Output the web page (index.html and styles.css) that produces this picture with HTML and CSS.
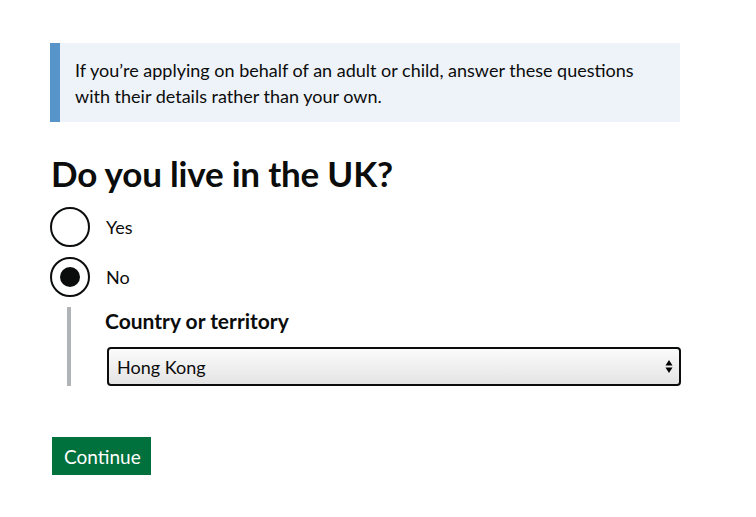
FILE: index.html
```html
<!DOCTYPE html>
<html lang="en">
<head>
    <meta charset="UTF-8">
    <meta name="viewport" content="width=device-width, initial-scale=1.0">
    <title>Do you live in the UK?</title>
    <link rel="stylesheet" href="styles.css">
</head>
<body>
    <div class="container">
        <div class="inset">
            If you’re applying on behalf of an adult or child, answer these questions with their details rather than your own.
        </div>
        <h1>Do you live in the UK?</h1>
        <div class="radios">
            <label class="radio">
                <span class="circle"></span>
                <span class="radio-label">Yes</span>
            </label>
            <label class="radio">
                <span class="circle checked"></span>
                <span class="radio-label">No</span>
            </label>
            <div class="conditional">
                <div class="field-label">Country or territory</div>
                <div class="select">
                    <span>Hong Kong</span>
                    <svg class="arrows" width="8" height="15" viewBox="0 0 8 15">
                        <path d="M4 1 L7.5 6.5 L0.5 6.5 Z" fill="#000"/>
                        <path d="M4 14 L7.5 8.5 L0.5 8.5 Z" fill="#000"/>
                    </svg>
                </div>
            </div>
        </div>
        <button class="button">Continue</button>
    </div>
</body>
</html>
```

FILE: styles.css
```css
body{
    margin:0;
    background:#fff;
    color:#0b0c0c;
    font-family: Lato, "Noto Sans", sans-serif;
}
.container{
    width:630px;
    padding:43px 0 0 50px;
}
.inset{
    background:#eef3f9;
    border-left:10px solid #5694ca;
    padding:14px 20px 13px 15px;
    font-size:18px;
    line-height:26px;
}
h1{
    margin:30px 0 0 1px;
    font-size:35px;
    line-height:42px;
    font-weight:bold;
    letter-spacing:-0.2px;
}
.radios{
    margin-top:13px;
}
.radio{
    display:flex;
    align-items:center;
    height:40px;
    margin-bottom:10px;
}
.circle{
    box-sizing:border-box;
    width:40px;
    height:40px;
    border:2px solid #0b0c0c;
    border-radius:50%;
    display:flex;
    align-items:center;
    justify-content:center;
}
.circle.checked::after{
    content:"";
    width:20px;
    height:20px;
    border-radius:50%;
    background:#0b0c0c;
}
.radio-label{
    margin-left:16px;
    font-size:18px;
}
.conditional{
    margin-left:17px;
    border-left:4px solid #b1b4b6;
    padding:0 0 0 34px;
    margin-top:2px;
}
.field-label{
    font-size:21px;
    font-weight:bold;
    line-height:28px;
}
.select{
    box-sizing:border-box;
    margin-top:12px;
    width:574px;
    height:39px;
    margin-left:2px;
    border:2px solid #0b0c0c;
    border-radius:4px;
    background:linear-gradient(#fbfbfb, #e4e4e4);
    display:flex;
    align-items:center;
    justify-content:space-between;
    padding:0 6px 0 8px;
    font-size:18px;
}
.button{
    margin:51px 0 0 2px;
    background:#00703c;
    color:#fff;
    border:0;
    box-shadow:0 2px 0 #002d18;
    font-family: Lato, "Noto Sans", sans-serif;
    font-size:19px;
    padding:8px 12px 9px;
    height:38px;
    width:99px;
}
```
